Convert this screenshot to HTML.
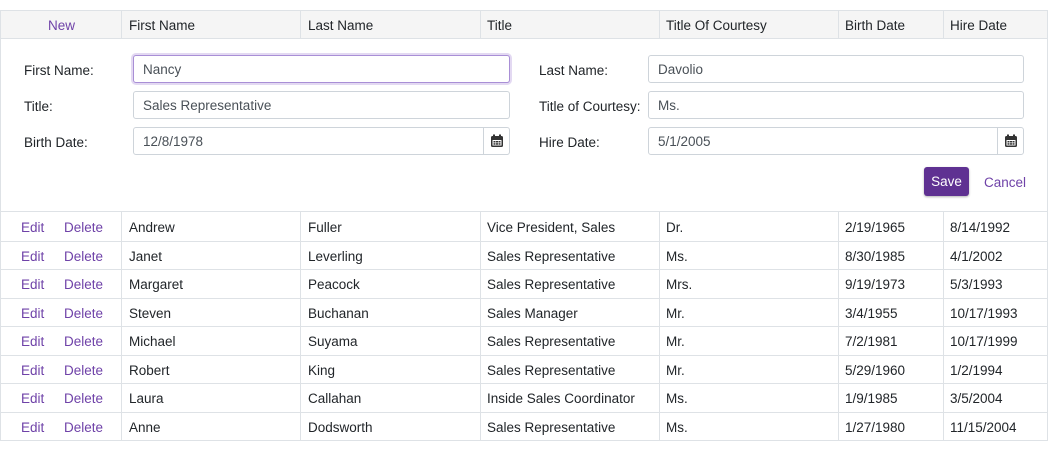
<!DOCTYPE html>
<html><head><style>
*{box-sizing:border-box;margin:0;padding:0}
body{width:1048px;height:451px;background:#fff;font-family:"Liberation Sans",sans-serif;font-size:13.5px;color:#212529;position:relative;overflow:hidden}
.a{position:absolute}
.t{position:absolute;white-space:nowrap;line-height:16px}
.p{color:#6f42a8}
.in{position:absolute;border:1px solid #ced4da;border-radius:3px;height:28px;padding-left:9px;line-height:27px;color:#495057;background:#fff}
.cal{position:absolute;top:0;right:0;width:26px;height:26px;border-left:1px solid #ced4da;display:flex;align-items:center;justify-content:center}
</style></head><body>
<div class="a" style="left:0;top:10px;width:1048px;height:431px;border:1px solid #dee2e6"></div>
<div class="a" style="left:1px;top:11px;width:1046px;height:28px;background:#f5f5f5;border-bottom:1px solid #dee2e6"></div>
<div class="a" style="left:1px;top:211px;width:1046px;height:1px;background:#dee2e6"></div>
<div id="g"></div>
<div class="t p" style="left:48px;top:18px">New</div>
<div class="t" style="left:129px;top:18px">First Name</div>
<div class="t" style="left:308px;top:18px">Last Name</div>
<div class="t" style="left:487px;top:18px">Title</div>
<div class="t" style="left:666px;top:18px">Title Of Courtesy</div>
<div class="t" style="left:845px;top:18px">Birth Date</div>
<div class="t" style="left:950px;top:18px">Hire Date</div>

<div class="t" style="left:24px;top:63px">First Name:</div>
<div class="t" style="left:24px;top:99px">Title:</div>
<div class="t" style="left:24px;top:135px">Birth Date:</div>
<div class="t" style="left:539px;top:63px">Last Name:</div>
<div class="t" style="left:539px;top:99px">Title of Courtesy:</div>
<div class="t" style="left:539px;top:135px">Hire Date:</div>
<div class="in" style="left:133px;top:55px;width:377px;border-color:#a98fd6;box-shadow:0 0 0 2px #e3d9f2">Nancy</div>
<div class="in" style="left:133px;top:91px;width:377px">Sales Representative</div>
<div class="in" style="left:133px;top:127px;width:377px">12/8/1978<div class="cal"><svg width="14" height="14" viewBox="0 0 14 14"><rect x="1" y="2" width="12" height="11" rx="1.5" fill="#333"/><rect x="3" y="0.5" width="2" height="3" fill="#333"/><rect x="9" y="0.5" width="2" height="3" fill="#333"/><rect x="2.5" y="6" width="9" height="5.5" fill="#fff"/><g fill="#333"><rect x="3.5" y="7" width="2" height="1.5"/><rect x="6" y="7" width="2" height="1.5"/><rect x="8.5" y="7" width="2" height="1.5"/><rect x="3.5" y="9.2" width="2" height="1.5"/><rect x="6" y="9.2" width="2" height="1.5"/><rect x="8.5" y="9.2" width="2" height="1.5"/></g></svg></div></div>
<div class="in" style="left:648px;top:55px;width:376px">Davolio</div>
<div class="in" style="left:648px;top:91px;width:376px">Ms.</div>
<div class="in" style="left:648px;top:127px;width:376px">5/1/2005<div class="cal"><svg width="14" height="14" viewBox="0 0 14 14"><rect x="1" y="2" width="12" height="11" rx="1.5" fill="#333"/><rect x="3" y="0.5" width="2" height="3" fill="#333"/><rect x="9" y="0.5" width="2" height="3" fill="#333"/><rect x="2.5" y="6" width="9" height="5.5" fill="#fff"/><g fill="#333"><rect x="3.5" y="7" width="2" height="1.5"/><rect x="6" y="7" width="2" height="1.5"/><rect x="8.5" y="7" width="2" height="1.5"/><rect x="3.5" y="9.2" width="2" height="1.5"/><rect x="6" y="9.2" width="2" height="1.5"/><rect x="8.5" y="9.2" width="2" height="1.5"/></g></svg></div></div>
<div class="a" style="left:924px;top:167px;width:45px;height:29px;background:#5f3192;border-radius:3px;color:#fff;text-align:center;line-height:30px;box-shadow:0 1px 2px rgba(0,0,0,.3)">Save</div>
<div class="t p" style="left:984px;top:175px">Cancel</div>
<script>
var rows=[["Andrew","Fuller","Vice President, Sales","Dr.","2/19/1965","8/14/1992"],["Janet","Leverling","Sales Representative","Ms.","8/30/1985","4/1/2002"],["Margaret","Peacock","Sales Representative","Mrs.","9/19/1973","5/3/1993"],["Steven","Buchanan","Sales Manager","Mr.","3/4/1955","10/17/1993"],["Michael","Suyama","Sales Representative","Mr.","7/2/1981","10/17/1999"],["Robert","King","Sales Representative","Mr.","5/29/1960","1/2/1994"],["Laura","Callahan","Inside Sales Coordinator","Ms.","1/9/1985","3/5/2004"],["Anne","Dodsworth","Sales Representative","Ms.","1/27/1980","11/15/2004"]];
var xs=[129,308,487,666,845,950],h="";
[121,300,480,659,838,943].forEach(function(x){h+='<div class="a" style="left:'+x+'px;top:11px;width:1px;height:28px;background:#dee2e6"></div><div class="a" style="left:'+x+'px;top:212px;width:1px;height:228px;background:#dee2e6"></div>';});
rows.forEach(function(r,i){var y=Math.round(212+i*28.5);if(i>0)h+='<div class="a" style="left:1px;top:'+y+'px;width:1046px;height:1px;background:#dee2e6"></div>';var ty=y+8;
h+='<div class="t p" style="left:21px;top:'+ty+'px">Edit</div><div class="t p" style="left:64px;top:'+ty+'px">Delete</div>';
r.forEach(function(c,j){h+='<div class="t" style="left:'+xs[j]+'px;top:'+ty+'px">'+c+'</div>';});});
document.getElementById('g').innerHTML=h;
</script>
</body></html>
